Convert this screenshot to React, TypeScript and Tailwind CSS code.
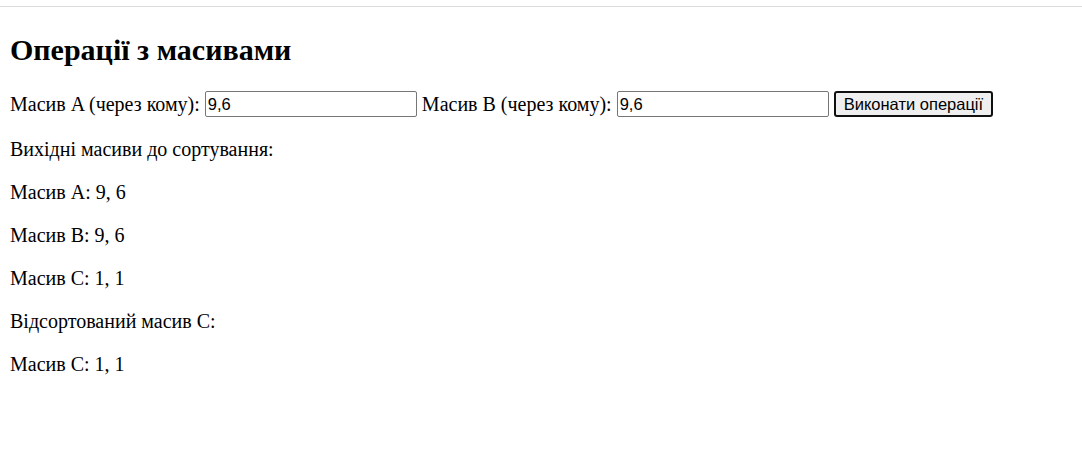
export default function App() {
  return (
    <div className="min-h-[465px] bg-white text-black" style={{ fontFamily: '"Liberation Serif", "Times New Roman", serif' }}>
      <div className="h-[7px] border-b border-[#dcdcdc]" />
      <div className="px-[10px]">
        <h1 className="mt-[26px] text-[30px] leading-[34px] font-bold">Операції з масивами</h1>

        <div className="mt-[24px] flex items-center gap-[5px] text-[20px] leading-[23px]">
          <label>Масив A (через кому):</label>
          <input
            defaultValue="9,6"
            className="h-[26px] w-[212px] rounded-[2px] border border-[#767676] px-[2px] text-[16.5px] outline-none"
            style={{ fontFamily: '"Liberation Sans", Arial, sans-serif' }}
          />
          <label>Масив B (через кому):</label>
          <input
            defaultValue="9,6"
            className="h-[26px] w-[212px] rounded-[2px] border border-[#767676] px-[2px] text-[16.5px] outline-none"
            style={{ fontFamily: '"Liberation Sans", Arial, sans-serif' }}
          />
          <button
            type="button"
            className="h-[26px] rounded-[3px] border-2 border-[#101010] bg-[#efefef] px-[8px] text-[16.5px] leading-none"
            style={{ fontFamily: '"Liberation Sans", Arial, sans-serif' }}
          >
            Виконати операції
          </button>
        </div>

        <div className="mt-[21px] flex flex-col gap-[20px] text-[20px] leading-[23px]">
          <p>Вихідні масиви до сортування:</p>
          <p>Масив A: 9, 6</p>
          <p>Масив B: 9, 6</p>
          <p>Масив C: 1, 1</p>
          <p>Відсортований масив C:</p>
          <p>Масив C: 1, 1</p>
        </div>
      </div>
    </div>
  )
}
